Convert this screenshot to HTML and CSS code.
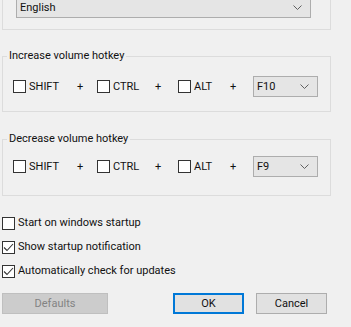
FILE: index.html
```html
<!DOCTYPE html>
<html lang="en">
<head>
    <meta charset="UTF-8">
    <title>Settings</title>
    <link rel="stylesheet" href="styles.css">
</head>
<body>
    <div class="panel">
        <!-- Language -->
        <div class="lang-group">
            <div class="combo wide">
                <span>English</span>
                <svg class="arrow" width="9" height="5" viewBox="0 0 9 5"><polyline points="0.5,0.5 4.5,4.5 8.5,0.5" /></svg>
            </div>
        </div>

        <!-- Increase volume hotkey -->
        <fieldset class="group increase">
            <legend>Increase volume hotkey</legend>
            <div class="hotkey-row">
                <label class="key shift"><span class="box"></span>SHIFT</label>
                <span class="plus">+</span>
                <label class="key ctrl"><span class="box"></span>CTRL</label>
                <span class="plus">+</span>
                <label class="key alt"><span class="box"></span>ALT</label>
                <span class="plus">+</span>
                <div class="combo small">
                    <span>F10</span>
                    <svg class="arrow" width="9" height="5" viewBox="0 0 9 5"><polyline points="0.5,0.5 4.5,4.5 8.5,0.5" /></svg>
                </div>
            </div>
        </fieldset>

        <!-- Decrease volume hotkey -->
        <fieldset class="group decrease">
            <legend>Decrease volume hotkey</legend>
            <div class="hotkey-row">
                <label class="key shift"><span class="box"></span>SHIFT</label>
                <span class="plus">+</span>
                <label class="key ctrl"><span class="box"></span>CTRL</label>
                <span class="plus">+</span>
                <label class="key alt"><span class="box"></span>ALT</label>
                <span class="plus">+</span>
                <div class="combo small">
                    <span>F9</span>
                    <svg class="arrow" width="9" height="5" viewBox="0 0 9 5"><polyline points="0.5,0.5 4.5,4.5 8.5,0.5" /></svg>
                </div>
            </div>
        </fieldset>

        <div class="options">
            <label class="option"><span class="box"></span>Start on windows startup</label>
            <label class="option"><span class="box"><svg width="11" height="11" viewBox="0 0 11 11"><polyline points="1,5.5 4,8.5 10,2" /></svg></span>Show startup notification</label>
            <label class="option"><span class="box"><svg width="11" height="11" viewBox="0 0 11 11"><polyline points="1,5.5 4,8.5 10,2" /></svg></span>Automatically check for updates</label>
        </div>

        <div class="buttons">
            <button class="btn defaults" disabled>Defaults</button>
            <button class="btn ok">OK</button>
            <button class="btn cancel">Cancel</button>
        </div>
    </div>
</body>
</html>
```

FILE: styles.css
```css
html, body {
    margin: 0;
    padding: 0;
    height: 100%;
    overflow: hidden;
    background-color: #f0f0f0;
}
body {
    font-family: Roboto, "Liberation Sans", sans-serif;
    font-size: 11px;
    line-height: 16px;
    color: #111111;
}
.panel {
    width: 329px;
    margin-left: 2px;
}
.lang-group {
    margin-top: -24px;
    padding: 20px 19px 11px 13px;
    border: 1px solid #dcdcdc;
}
.combo {
    display: flex;
    align-items: center;
    justify-content: space-between;
    box-sizing: border-box;
    height: 21px;
    padding: 0 8px 0 3px;
    background-color: #e5e5e5;
    border: 1px solid #adadad;
}
.combo .arrow polyline {
    fill: none;
    stroke: #606060;
    stroke-width: 1;
}
.combo.small {
    width: 65px;
    margin-left: 13px;
}
.group {
    margin: 0;
    border: 1px solid #dcdcdc;
    padding: 12px 10px 14px 10px;
    min-width: 0;
}
.group legend {
    padding: 0 2px;
    margin-left: -6px;
}
.group.increase {
    margin-top: 18px;
}
.group.decrease {
    margin-top: 19px;
    padding-top: 9px;
    padding-bottom: 18px;
}
.hotkey-row {
    display: flex;
    align-items: center;
    height: 21px;
}
.key {
    display: flex;
    align-items: center;
}
.key.shift {
    width: 60px;
}
.key.ctrl {
    width: 54px;
    margin-left: 10px;
}
.key.alt {
    width: 48px;
    margin-left: 13px;
}
.plus {
    width: 14px;
    text-align: center;
}
.box {
    display: flex;
    align-items: center;
    justify-content: center;
    box-sizing: border-box;
    width: 13px;
    height: 13px;
    margin-right: 3px;
    background-color: #ffffff;
    border: 1px solid #333333;
}
.box polyline {
    fill: none;
    stroke: #333333;
    stroke-width: 1.1;
}
.options {
    margin-top: 15px;
}
.option {
    display: flex;
    align-items: center;
    height: 24px;
}
.buttons {
    display: flex;
    margin-top: 10px;
}
.btn {
    box-sizing: border-box;
    height: 21px;
    padding: 0;
    font-family: Roboto, "Liberation Sans", sans-serif;
    font-size: 11px;
    color: #111111;
    background-color: #e1e1e1;
    border: 1px solid #adadad;
}
.btn.defaults {
    width: 106px;
    color: #838383;
    background-color: #cccccc;
    border-color: #bfbfbf;
}
.btn.ok {
    width: 71px;
    margin-left: 65px;
    border: 2px solid #0078d7;
}
.btn.cancel {
    width: 71px;
    margin-left: 12px;
}
```
